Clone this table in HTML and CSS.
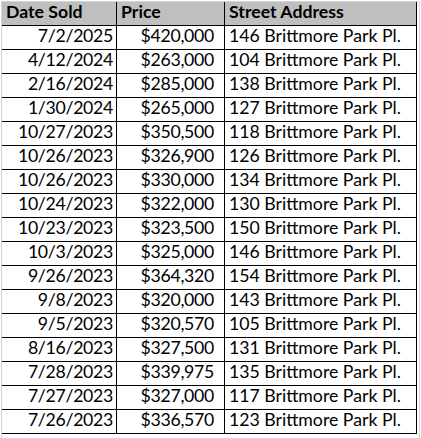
FILE: index.html
```html
<!DOCTYPE html>
<html>
<head>
<meta charset="utf-8">
<link rel="stylesheet" href="styles.css">
</head>
<body>
<div class="sheet">
  <div class="grid">
    <div class="cell head">Date Sold</div>
    <div class="cell head">Price</div>
    <div class="cell head">Street Address</div>

    <div class="cell date">7/2/2025</div><div class="cell price">$420,000</div><div class="cell addr">146 Brittmore Park Pl.</div>
    <div class="cell date">4/12/2024</div><div class="cell price">$263,000</div><div class="cell addr">104 Brittmore Park Pl.</div>
    <div class="cell date">2/16/2024</div><div class="cell price">$285,000</div><div class="cell addr">138 Brittmore Park Pl.</div>
    <div class="cell date">1/30/2024</div><div class="cell price">$265,000</div><div class="cell addr">127 Brittmore Park Pl.</div>
    <div class="cell date">10/27/2023</div><div class="cell price">$350,500</div><div class="cell addr">118 Brittmore Park Pl.</div>
    <div class="cell date">10/26/2023</div><div class="cell price">$326,900</div><div class="cell addr">126 Brittmore Park Pl.</div>
    <div class="cell date">10/26/2023</div><div class="cell price">$330,000</div><div class="cell addr">134 Brittmore Park Pl.</div>
    <div class="cell date">10/24/2023</div><div class="cell price">$322,000</div><div class="cell addr">130 Brittmore Park Pl.</div>
    <div class="cell date">10/23/2023</div><div class="cell price">$323,500</div><div class="cell addr">150 Brittmore Park Pl.</div>
    <div class="cell date">10/3/2023</div><div class="cell price">$325,000</div><div class="cell addr">146 Brittmore Park Pl.</div>
    <div class="cell date">9/26/2023</div><div class="cell price">$364,320</div><div class="cell addr">154 Brittmore Park Pl.</div>
    <div class="cell date">9/8/2023</div><div class="cell price">$320,000</div><div class="cell addr">143 Brittmore Park Pl.</div>
    <div class="cell date">9/5/2023</div><div class="cell price">$320,570</div><div class="cell addr">105 Brittmore Park Pl.</div>
    <div class="cell date">8/16/2023</div><div class="cell price">$327,500</div><div class="cell addr">131 Brittmore Park Pl.</div>
    <div class="cell date">7/28/2023</div><div class="cell price">$339,975</div><div class="cell addr">135 Brittmore Park Pl.</div>
    <div class="cell date">7/27/2023</div><div class="cell price">$327,000</div><div class="cell addr">117 Brittmore Park Pl.</div>
    <div class="cell date">7/26/2023</div><div class="cell price">$336,570</div><div class="cell addr">123 Brittmore Park Pl.</div>
  </div>
</div>
</body>
</html>
```
FILE: styles.css
```css
html, body {
  margin: 0;
  padding: 0;
  background: #ffffff;
}
body {
  font-family: Lato, "Open Sans", sans-serif;
  font-size: 17.7px;
  color: #000;
}
.sheet {
  margin-left: 1px;
  margin-top: 1px;
  height: 437px;
  width: 419px;
  box-sizing: border-box;
  border-top: 1px solid #d4d4d4;
  border-left: 1px solid #d4d4d4;
  border-right: 1px solid #d4d4d4;
}
.grid {
  display: grid;
  grid-template-columns: 115px 108px 192px;
  grid-template-rows: 24px;
  grid-auto-rows: 24px;
}
.cell {
  box-sizing: border-box;
  border-right: 1px solid #000;
  border-bottom: 1px solid #000;
  display: flex;
  align-items: flex-end;
  padding-bottom: 4px;
  white-space: nowrap;
  line-height: 1;
}
.head {
  background: #bfbfbf;
  font-weight: bold;
  padding-left: 4px;
}
.date {
  justify-content: flex-end;
  padding-right: 3px;
  letter-spacing: -0.3px;
}
.price {
  justify-content: flex-end;
  padding-right: 10px;
  letter-spacing: -0.3px;
}
.addr {
  padding-left: 4px;
}
```
